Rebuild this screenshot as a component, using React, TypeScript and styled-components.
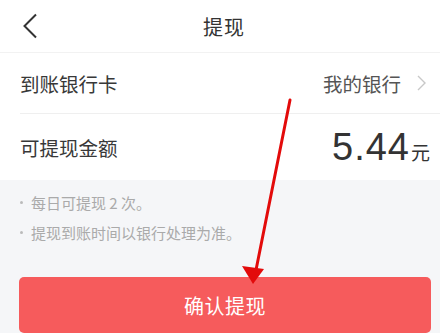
import { FC } from 'react';
import styled, { createGlobalStyle } from 'styled-components';

const FONT = '"Noto Sans CJK SC", "Liberation Sans", sans-serif';

const GlobalStyle = createGlobalStyle`
  html, body {
    margin: 0;
    padding: 0;
    background: #f5f6f8;
    font-family: ${FONT};
  }
`;

const Page = styled.div`
  position: relative;
  width: 440px;
  height: 333px;
  overflow: hidden;
  display: flex;
  flex-direction: column;
  background: #f5f6f8;
`;

const Header = styled.header`
  position: relative;
  height: 53px;
  flex-shrink: 0;
  display: flex;
  align-items: center;
  justify-content: center;
  background: #fff;
  border-bottom: 1px solid #f2f2f2;
  box-sizing: border-box;
`;

const BackButton = styled.div`
  position: absolute;
  left: 22px;
  top: 13px;
  width: 16px;
  height: 26px;
  display: flex;
`;

const Title = styled.h1`
  margin: 0 0 0 8px;
  font-size: 20px;
  font-weight: 400;
  color: #333;
  letter-spacing: 1px;
`;

const Card = styled.section`
  background: #fff;
  padding-left: 20px;
`;

const Row = styled.div<{ $height: number; $divider?: boolean }>`
  height: ${(p) => p.$height}px;
  display: flex;
  align-items: center;
  justify-content: space-between;
  padding-right: ${(p) => (p.$divider ? 14 : 10)}px;
  box-sizing: border-box;
  border-bottom: ${(p) => (p.$divider ? '1px solid #efefef' : 'none')};
`;

const Label = styled.span`
  font-size: 19.5px;
  color: #383838;
`;

const Value = styled.span`
  display: flex;
  align-items: center;
  gap: 16px;
  font-size: 19.5px;
  color: #555;
`;

const Amount = styled.span`
  display: flex;
  align-items: baseline;
  color: #333;
`;

const AmountNumber = styled.span`
  font-family: "Liberation Sans", sans-serif;
  font-size: 38px;
  letter-spacing: 1px;
`;

const AmountUnit = styled.span`
  font-size: 19px;
  margin-left: 1px;
`;

const Notes = styled.ul`
  list-style: none;
  margin: 0;
  padding: 7px 20px 0;
`;

const Note = styled.li`
  display: flex;
  align-items: center;
  gap: 8px;
  height: 30px;
  font-size: 15px;
  color: #aaa;

  &::before {
    content: '';
    width: 3px;
    height: 3px;
    border-radius: 50%;
    background: #bbb;
  }
`;

const ConfirmButton = styled.button`
  margin: 30px 9px 0 19px;
  height: 56px;
  border: none;
  border-radius: 5px;
  background: #f65b5c;
  color: #fff;
  font-family: ${FONT};
  font-size: 20px;
  letter-spacing: 0.5px;
`;

const Annotation = styled.svg`
  position: absolute;
  left: 0;
  top: 0;
  pointer-events: none;
`;

const App: FC = () => (
  <>
    <GlobalStyle />
    <Page>
      <Header>
        <BackButton>
          <svg width="16" height="26" viewBox="0 0 16 26">
            <path d="M14 1.5 L2.5 13 L14 24.5" fill="none" stroke="#333" strokeWidth="2" />
          </svg>
        </BackButton>
        <Title>提现</Title>
      </Header>
      <Card>
        <Row $height={61} $divider>
          <Label>到账银行卡</Label>
          <Value>
            我的银行
            <svg width="9" height="16" viewBox="0 0 9 16">
              <path d="M1 1 L8 8 L1 15" fill="none" stroke="#c8c8c8" strokeWidth="1.4" />
            </svg>
          </Value>
        </Row>
        <Row $height={66}>
          <Label>可提现金额</Label>
          <Amount>
            <AmountNumber>5.44</AmountNumber>
            <AmountUnit>元</AmountUnit>
          </Amount>
        </Row>
      </Card>
      <Notes>
        <Note>每日可提现 2 次。</Note>
        <Note>提现到账时间以银行处理为准。</Note>
      </Notes>
      <ConfirmButton>确认提现</ConfirmButton>
      <Annotation width="440" height="333" viewBox="0 0 440 333">
        <line x1="290" y1="100" x2="256" y2="270" stroke="#e30b0b" strokeWidth="3" strokeLinecap="round" />
        <polygon points="253,284 242,266 264,269" fill="#e30b0b" />
      </Annotation>
    </Page>
  </>
);

export default App;
